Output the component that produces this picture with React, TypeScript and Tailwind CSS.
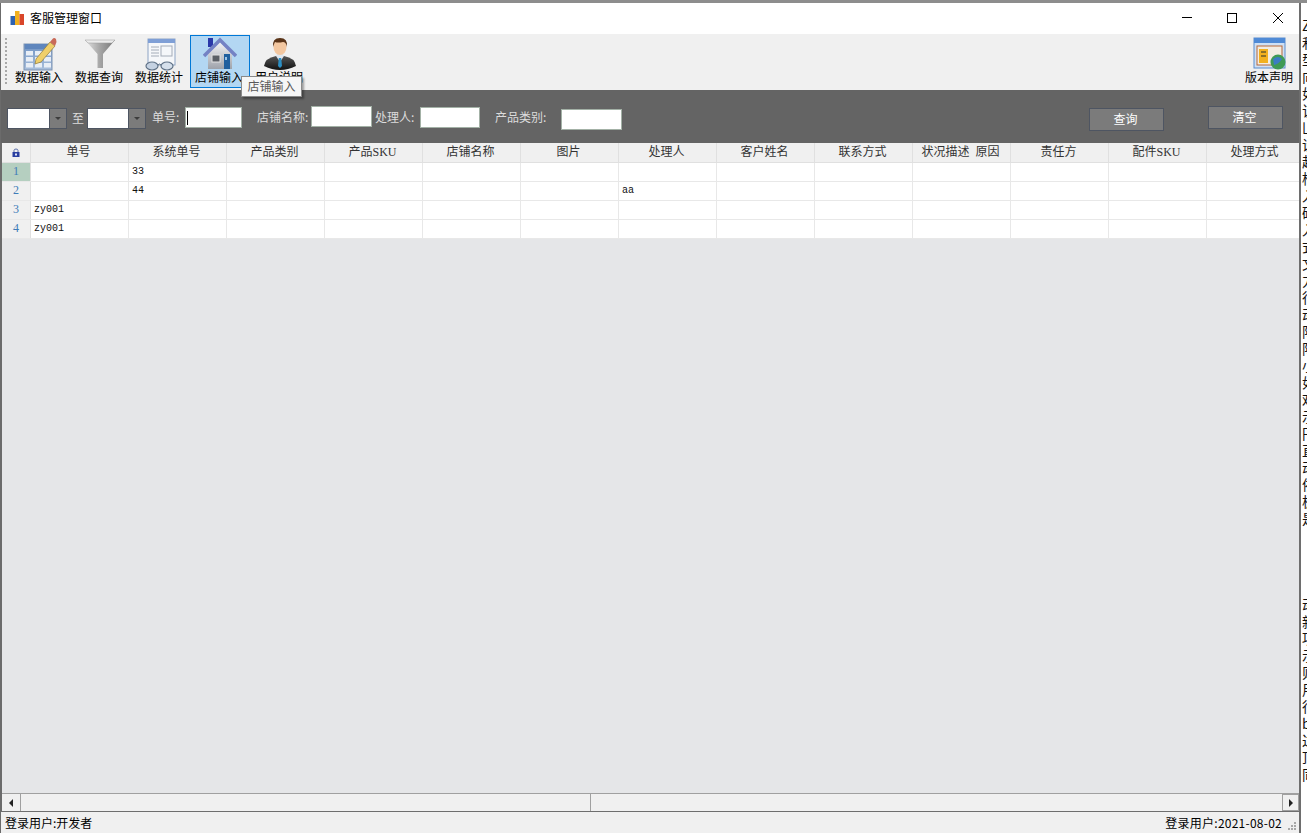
const uiFont = "font-['Noto_Sans_CJK_SC','Noto_Sans',sans-serif]";
const headerFont = "font-['Liberation_Serif','Noto_Sans_CJK_SC',serif]";

const columns = [
  "单号",
  "系统单号",
  "产品类别",
  "产品SKU",
  "店铺名称",
  "图片",
  "处理人",
  "客户姓名",
  "联系方式",
  "状况描述  原因",
  "责任方",
  "配件SKU",
  "处理方式",
];

const rows: Record<number, string>[] = [
  { 1: "33" },
  { 1: "44", 6: "aa" },
  { 0: "zy001" },
  { 0: "zy001" },
];

// clipped text of the window behind, down the right edge
const behindTop = "Z和型向如该凵设起框入码入式文力行动际际小如难示円直动依板是".split("");
const behindBottom = "动新项示则用行b过顶同".split("");

function ChartIcon() {
  return (
    <svg width="16" height="16" viewBox="0 0 16 16">
      <rect x="0.500" y="6" width="4.5" height="9" fill="#2f62b0" />
      <rect x="5" y="1" width="4.5" height="14" fill="#f2b01e" />
      <rect x="9.500" y="4" width="4.5" height="11" fill="#d9462a" />
    </svg>
  );
}

function TableIcon() {
  return (
    <svg width="34" height="34" viewBox="0 0 34 34">
      <defs>
        <linearGradient id="tb" x1="0" y1="0" x2="0" y2="1">
          <stop offset="0" stopColor="#6f93c4" />
          <stop offset="1" stopColor="#a9bfdc" />
        </linearGradient>
      </defs>
      <rect x="1" y="7" width="28" height="26" fill="url(#tb)" stroke="#7d93b2" />
      <rect x="2" y="7" width="26" height="5" fill="#5f86bd" />
      {[14, 20, 26].map((y) =>
        [3, 12, 21].map((x) => (
          <rect key={`${x}-${y}`} x={x} y={y} width="7" height="4.5" fill="#e8eef6" />
        ))
      )}
      <path d="M13 22 L27 5 L32 9 L18 25 L12 27 Z" fill="#f0cf6a" stroke="#8f7a3a" strokeWidth="0.7" />
      <path d="M27 5 L29.5 2 Q31 0 33 2 L33.5 5 L32 9 Z" fill="#c96a58" />
    </svg>
  );
}

function FunnelIcon() {
  return (
    <svg width="34" height="34" viewBox="0 0 34 34">
      <defs>
        <linearGradient id="fn" x1="0" y1="0" x2="1" y2="0">
          <stop offset="0" stopColor="#e4e4e4" />
          <stop offset="0.5" stopColor="#a5a5a5" />
          <stop offset="1" stopColor="#777" />
        </linearGradient>
      </defs>
      <path d="M2 3 H32 L20 17 V31 H14.500 V17 Z" fill="url(#fn)" />
      <path d="M2 3 H32 L29 6 H5 Z" fill="#ececec" stroke="#9a9a9a" strokeWidth="0.5" />
    </svg>
  );
}

function ReportIcon() {
  return (
    <svg width="34" height="34" viewBox="0 0 34 34">
      <rect x="5" y="2" width="27" height="26" fill="#f5f7fa" stroke="#8ea4c4" />
      <rect x="5" y="2" width="27" height="4" fill="#7f9fd6" />
      <path d="M8 10 H16 M8 13 H16 M8 16 H16 M8 19 H16" stroke="#a4acb8" />
      <rect x="18" y="9" width="11" height="10" fill="none" stroke="#a4acb8" />
      <ellipse cx="9" cy="29" rx="6" ry="4" fill="#c5d2e2" stroke="#5f7186" strokeWidth="1.2" />
      <ellipse cx="24" cy="29" rx="6" ry="4" fill="#d6e0ec" stroke="#5f7186" strokeWidth="1.2" />
      <path d="M15 28 Q16.500 26 18 28" stroke="#5f7186" fill="none" />
    </svg>
  );
}

function HouseIcon() {
  return (
    <svg width="34" height="34" viewBox="0 0 34 34">
      <defs>
        <linearGradient id="hw" x1="0" y1="0" x2="0" y2="1">
          <stop offset="0" stopColor="#f4f4f6" />
          <stop offset="1" stopColor="#9ea2aa" />
        </linearGradient>
      </defs>
      <rect x="5" y="1" width="5" height="9" fill="#2a38a8" />
      <path d="M5 17 L17 5 L29 17 V32 H5 Z" fill="url(#hw)" />
      <path d="M1 19 L17 3 L33 19" fill="none" stroke="#7482c4" strokeWidth="3.500" />
      <rect x="9" y="18" width="8" height="7" fill="#5b5f66" stroke="#e2e2e2" />
      <rect x="21" y="17" width="6" height="15" fill="#1f5f9e" />
      <rect x="22" y="20" width="2" height="3" fill="#9cc4e8" />
    </svg>
  );
}

function PersonIcon() {
  return (
    <svg width="34" height="34" viewBox="0 0 34 34">
      <defs>
        <linearGradient id="ps" x1="0" y1="0" x2="0" y2="1">
          <stop offset="0" stopColor="#555" />
          <stop offset="1" stopColor="#111" />
        </linearGradient>
      </defs>
      <path d="M1 29 Q2 21 13 19 H21 Q32 21 33 29 Q17 37 1 29 Z" fill="url(#ps)" />
      <path d="M13 19 L17 25 L21 19 L20 17 H14 Z" fill="#dfe6ee" />
      <path d="M15.800 21 H18.200 L19 29 L17 31 L15 29 Z" fill="#2c8fc4" />
      <ellipse cx="17" cy="10" rx="6.500" ry="8" fill="#f3c7a0" />
      <path d="M10 10 Q9 1 17 1 Q25 1 24 10 Q23 5 20 5 Q15 6 12 5 Q11 7 10 10 Z" fill="#5a3418" />
    </svg>
  );
}

function AboutIcon() {
  return (
    <svg width="34" height="34" viewBox="0 0 34 34">
      <rect x="1" y="1" width="31" height="30" fill="#cfe0f4" stroke="#5a8ccc" />
      <rect x="1" y="1" width="31" height="5" fill="#4f8ad6" />
      <rect x="4" y="9" width="25" height="19" fill="#f3ece2" stroke="#b5683a" />
      <rect x="6" y="12" width="9" height="14" fill="#f2b01e" />
      <path d="M8 15 H13 M8 19 H13" stroke="#6a5b2a" strokeWidth="1.500" />
      <circle cx="25" cy="25" r="7.500" fill="#3f9a55" />
      <path d="M20 22 Q25 18 29 22 Q26 27 21 28 Z" fill="#3b7cc4" />
    </svg>
  );
}

function ToolButton({
  label,
  icon,
  active,
}: {
  label: string;
  icon: React.ReactNode;
  active?: boolean;
}) {
  return (
    <div
      className={`flex h-[53px] w-[60px] flex-col items-center border pr-[2px] ${
        active ? "border-[#0078d7] bg-[#b3d7f3]" : "border-transparent"
      }`}
    >
      <div className="mt-[1px] h-[32px] pl-[1px]">{icon}</div>
      <span className={`whitespace-nowrap text-[12px] leading-[16px] text-black ${uiFont}`}>
        {label}
      </span>
    </div>
  );
}

function Combo({ className }: { className: string }) {
  return (
    <div className={`flex h-[21px] border border-[#4e5562] bg-white ${className}`}>
      <div className="flex-1" />
      <div className="flex w-[17px] items-center justify-center border-l border-[#4e5562] bg-[#7b7b7b]">
        <div className="h-0 w-0 border-x-[3.5px] border-t-[3.5px] border-x-transparent border-t-[#3c3c3c]" />
      </div>
    </div>
  );
}

function Label({ text, className }: { text: string; className: string }) {
  return (
    <span className={`whitespace-nowrap text-[12px] leading-[16px] text-[#dcdcdc] ${uiFont} ${className}`}>
      {text}
    </span>
  );
}

function TextBox({ className, caret }: { className: string; caret?: boolean }) {
  return (
    <div className={`h-[21px] border border-[#a3b1a6] bg-white pl-[1px] pt-[3px] ${className}`}>
      {caret && <div className="h-[14px] w-[1px] bg-black" />}
    </div>
  );
}

function FilterButton({ text, className }: { text: string; className: string }) {
  return (
    <div
      className={`flex h-[23px] w-[75px] items-center justify-center border border-[#4e5562] bg-[#7b7b7b] pb-[2px] pr-[2px] text-[12px] text-white ${uiFont} ${className}`}
    >
      {text}
    </div>
  );
}

function LockIcon() {
  return (
    <svg width="8" height="9" viewBox="0 0 8 9">
      <path d="M2 4 V2.500 Q2 1 4 1 Q6 1 6 2.500 V4" fill="none" stroke="#5a6fa8" />
      <rect x="0.500" y="4" width="7" height="5" fill="#2a3fa0" />
      <rect x="3" y="5.500" width="2" height="2" fill="#dfe6f5" />
    </svg>
  );
}

function DataGrid() {
  return (
    <div className="flex min-h-0 flex-1 flex-col overflow-hidden bg-[#e5e6e8]">
      <div className="flex h-[20px] shrink-0 border-b border-[#e0e0e0] bg-[#f0f0f0]">
        <div className="flex w-[29px] shrink-0 items-center justify-center border-r border-[#e0e0e0]">
          <LockIcon />
        </div>
        {columns.map((title) => (
          <div
            key={title}
            className={`flex w-[98px] shrink-0 items-center justify-center whitespace-pre border-r border-[#e0e0e0] pb-[1px] pr-[2px] text-[12px] text-[#333] ${headerFont}`}
          >
            {title}
          </div>
        ))}
      </div>
      {rows.map((row, i) => (
        <div key={i} className="flex h-[19px] shrink-0 border-b border-[#e8e8e8] bg-white">
          <div
            className={`flex w-[29px] shrink-0 items-center justify-center border-r border-[#e0e0e0] pb-[2px] font-['Liberation_Serif',serif] text-[12px] text-[#3f7cb8] ${
              i === 0 ? "bg-[#b5cfc0]" : "bg-[#f0f0f0]"
            }`}
          >
            {i + 1}
          </div>
          {columns.map((title, c) => (
            <div
              key={title}
              className="w-[98px] shrink-0 border-r border-[#e8e8e8] pl-[3px] font-['Liberation_Mono',monospace] text-[10px] leading-[18px] text-[#111]"
            >
              {row[c]}
            </div>
          ))}
        </div>
      ))}
    </div>
  );
}

function ScrollBar() {
  return (
    <div className="flex h-[18px] shrink-0 border-t border-[#a0a0a0] bg-[#f0f0f0]">
      <div className="flex w-[18px] items-center justify-center">
        <div className="h-0 w-0 border-y-[4px] border-r-[4px] border-y-transparent border-r-[#222]" />
      </div>
      <div className="w-[571px] border-x border-[#a0a0a0]" />
      <div className="flex-1" />
      <div className="flex w-[17px] items-center justify-center border border-[#a0a0a0]">
        <div className="h-0 w-0 border-y-[4px] border-l-[4px] border-y-transparent border-l-[#222]" />
      </div>
    </div>
  );
}

function StatusBar() {
  return (
    <div
      className={`relative -ml-[1px] flex h-[22px] shrink-0 items-center justify-between border-t border-[#6e6e6e] bg-[#f0f0f0] pl-[4px] pr-[17px] text-[12px] text-black ${uiFont}`}
    >
      <span>登录用户:开发者</span>
      <span className="tracking-[0.25px]">登录用户:2021-08-02</span>
      <div className="absolute bottom-[3px] right-[3px] grid grid-cols-3 gap-[1px]">
        {[0, 0, 1, 0, 1, 1, 1, 1, 1].map((on, i) => (
          <div key={i} className={`h-[2px] w-[2px] ${on ? "bg-[#a8a8a8]" : ""}`} />
        ))}
      </div>
    </div>
  );
}

export default function App() {
  return (
    <div className="flex h-[833px] w-[1307px] flex-col overflow-hidden bg-[#6b6b6b]">
      <div className="h-[3px] shrink-0 bg-[#8d8d8d]" />
      <div className="flex min-h-0 flex-1">
        <div className="relative flex w-[1301px] shrink-0 flex-col border-r-2 border-[#6e6e6e] pl-[2px]">
          {/* title bar */}
          <div className="-ml-[1px] flex h-[31px] shrink-0 items-center bg-white pb-[2px] pl-[9px]">
            <ChartIcon />
            <span className={`ml-[4px] text-[12px] text-black ${uiFont}`}>客服管理窗口</span>
            <div className="ml-auto flex items-center pr-[16px]">
              <div className="h-[1px] w-[10px] bg-black" />
              <div className="ml-[35px] h-[10px] w-[10px] border border-black" />
              <svg className="ml-[36px]" width="10" height="10" viewBox="0 0 10 10">
                <path d="M0 0 L10 10 M10 0 L0 10" stroke="#000" strokeWidth="1" />
              </svg>
            </div>
          </div>

          {/* toolbar */}
          <div className="-ml-[1px] flex h-[56px] shrink-0 items-start bg-[#f0f0f0] pt-[1px]">
            <div className="ml-[4px] mt-[3px] h-[46px] w-[2px] bg-[repeating-linear-gradient(to_bottom,#a8a8a8_0,#a8a8a8_2px,transparent_2px,transparent_4px)]" />
            <div className="ml-[3px] flex">
              <ToolButton label="数据输入" icon={<TableIcon />} />
              <ToolButton label="数据查询" icon={<FunnelIcon />} />
              <ToolButton label="数据统计" icon={<ReportIcon />} />
              <ToolButton label="店铺输入" icon={<HouseIcon />} active />
              <ToolButton label="用户说明" icon={<PersonIcon />} />
            </div>
            <div className="-mr-[1px] ml-auto">
              <ToolButton label="版本声明" icon={<AboutIcon />} />
            </div>
          </div>

          {/* filter bar */}
          <div className="-ml-[1px] flex h-[53px] shrink-0 items-start bg-[#646464] pl-[1px]">
            <Combo className="ml-[5px] mt-[18px] w-[60px]" />
            <Label text="至" className="ml-[5px] mt-[20px] w-[12px]" />
            <Combo className="ml-[3px] mt-[18px] w-[59px]" />
            <Label text="单号:" className="ml-[6px] mt-[19px] w-[33px]" />
            <TextBox className="mt-[17px] w-[57px]" caret />
            <Label text="店铺名称:" className="ml-[15px] mt-[19px] w-[54px]" />
            <TextBox className="mt-[16px] w-[61px]" />
            <Label text="处理人:" className="ml-[3px] mt-[19px] w-[45px]" />
            <TextBox className="mt-[17px] w-[60px]" />
            <Label text="产品类别:" className="ml-[15px] mt-[19px] w-[66px]" />
            <TextBox className="mt-[19px] w-[61px]" />
            <FilterButton text="查询" className="ml-[467px] mt-[18px]" />
            <FilterButton text="清空" className="ml-[44px] mt-[16px]" />
          </div>

          <DataGrid />
          <ScrollBar />
          <StatusBar />

          {/* tooltip */}
          <div
            className={`absolute left-[241px] top-[73px] flex h-[21px] w-[61px] items-center justify-center border border-[#8a8a8a] bg-[#f6f6f6] pb-[2px] text-[12px] text-[#5a5a5a] shadow-[2px_2px_2px_rgba(0,0,0,0.35)] ${uiFont}`}
          >
            店铺输入
          </div>
        </div>

        {/* sliver of the window behind */}
        <div className={`flex w-[6px] shrink-0 flex-col overflow-hidden bg-white pl-[1px] pt-[14px] text-[14px] leading-[17px] text-[#111] ${uiFont}`}>
          {behindTop.map((ch, i) => (
            <span key={i} className="h-[17px] shrink-0">{ch}</span>
          ))}
          <div className="h-[69px] shrink-0" />
          {behindBottom.map((ch, i) => (
            <span key={i} className="h-[17px] shrink-0">{ch}</span>
          ))}
        </div>
      </div>
    </div>
  );
}
